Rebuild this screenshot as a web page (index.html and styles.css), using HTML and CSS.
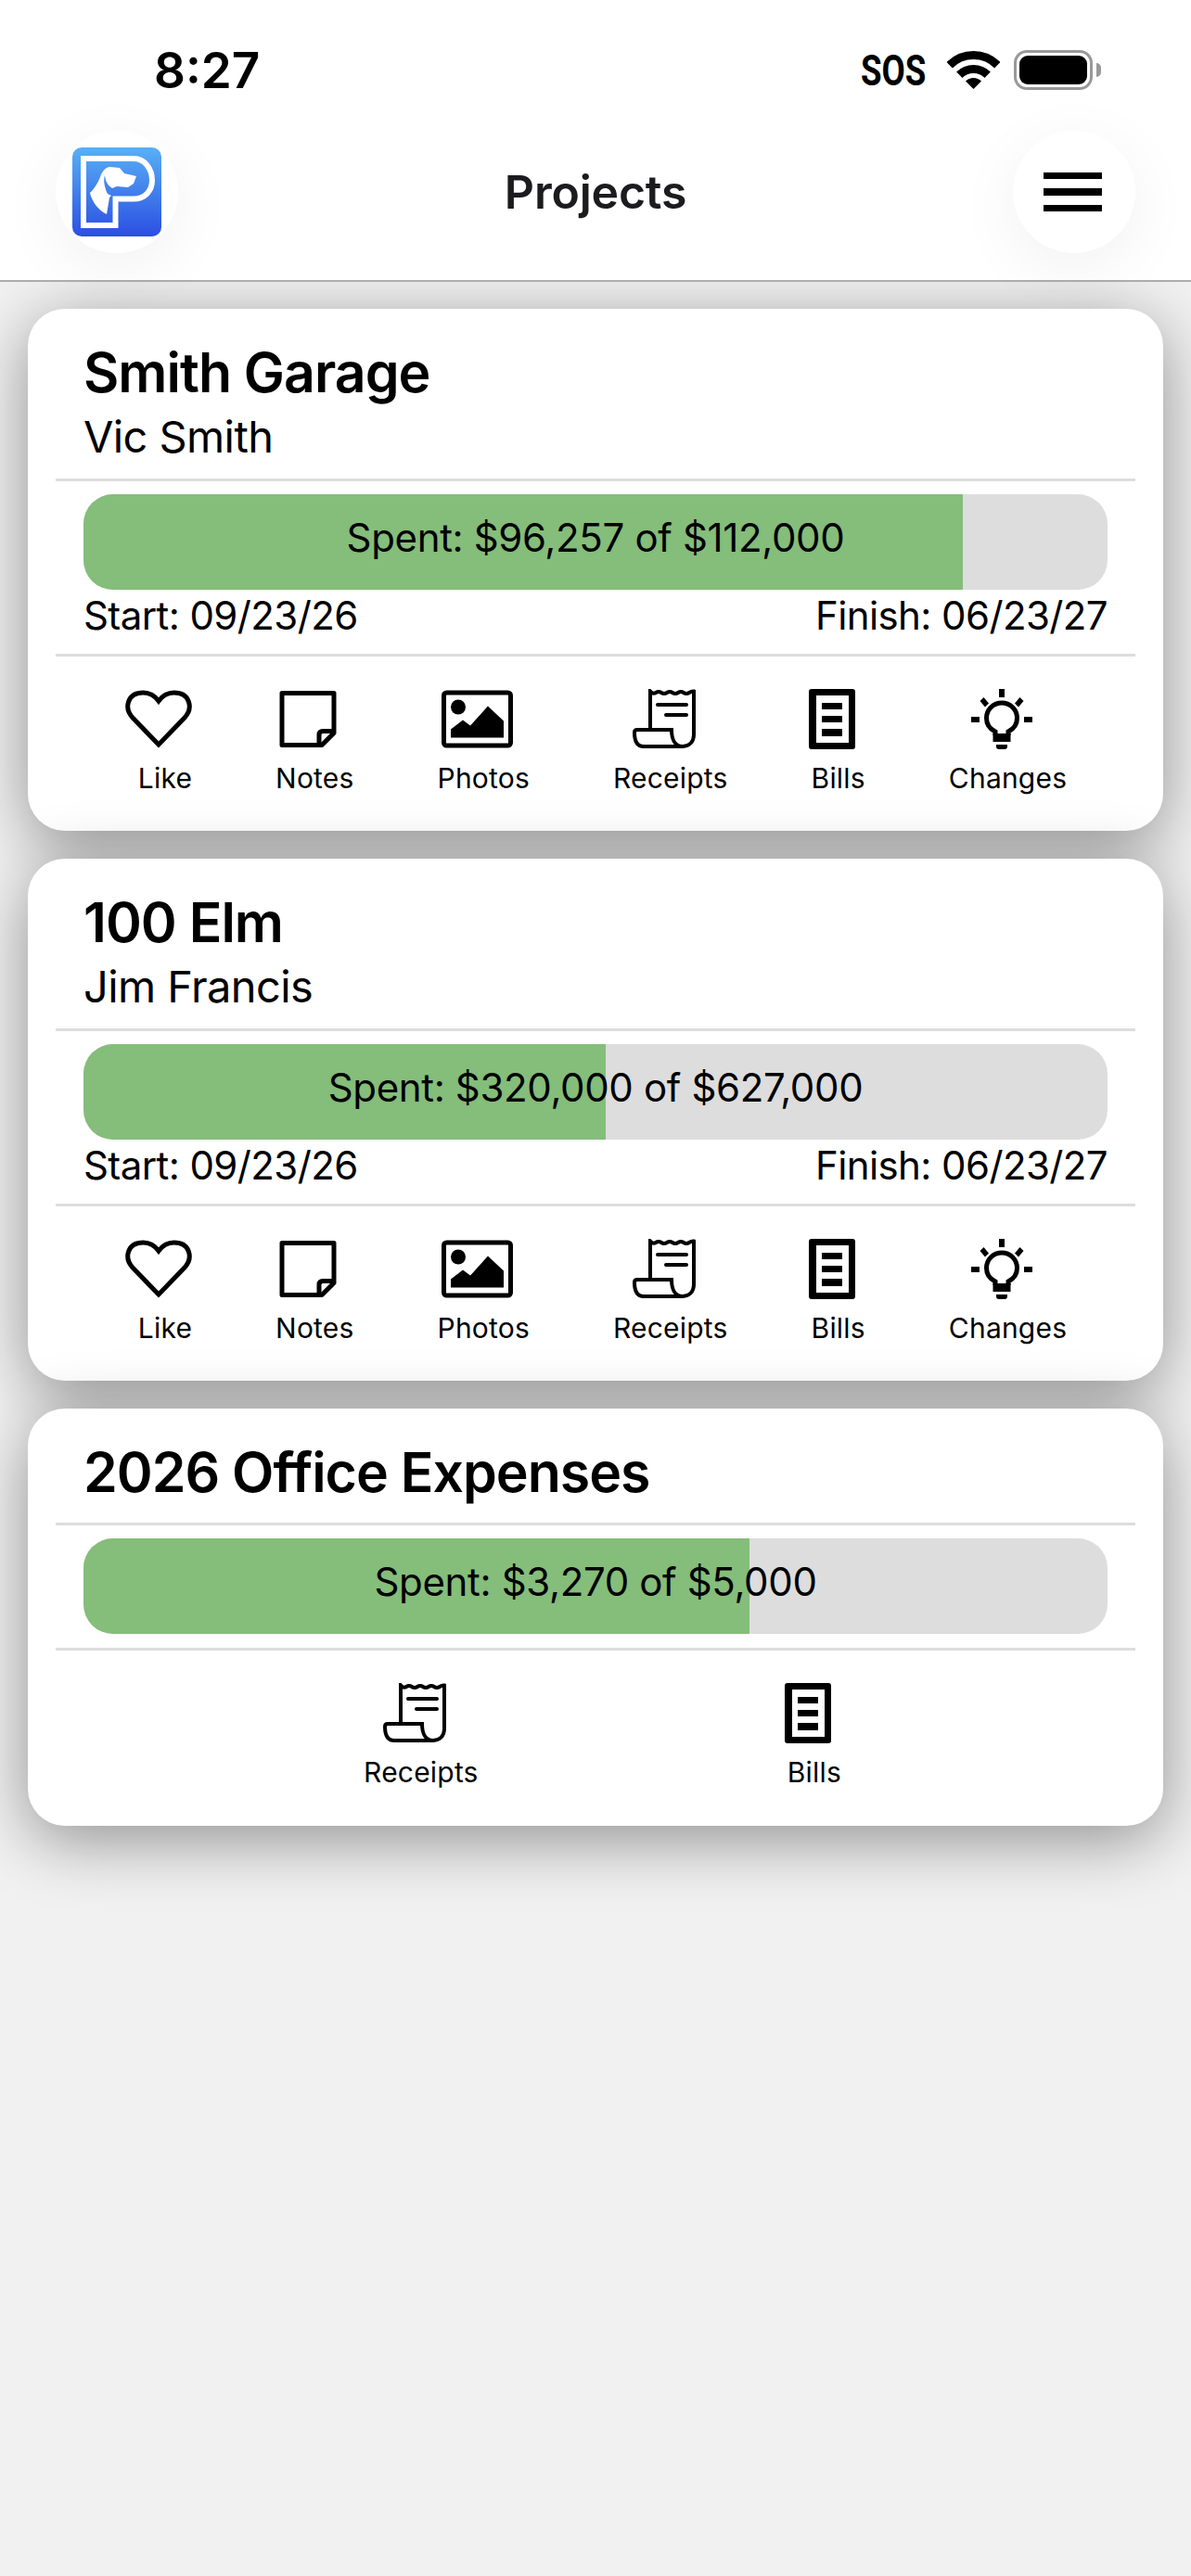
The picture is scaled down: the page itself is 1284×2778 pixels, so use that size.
FILE: index.html
```html
<!DOCTYPE html>
<html lang="en">
<head>
<meta charset="utf-8">
<title>Projects</title>
<link rel="stylesheet" href="styles.css">
</head>
<body>
<svg class="defs" width="0" height="0" aria-hidden="true">
  <defs>
    <linearGradient id="logoGrad" x1="0" y1="0" x2="0" y2="1">
      <stop offset="0" stop-color="#58b0f6"/>
      <stop offset="1" stop-color="#2b4fe2"/>
    </linearGradient>
    <symbol id="i-heart" viewBox="0 0 72 62">
      <path d="M36 58.5 L8 29.5 C-1.5 19 2 2.5 19.5 2.5 C26.5 2.5 32 6 36 11.5 C40 6 45.5 2.5 52.5 2.5 C70 2.5 73.5 19 64 29.5 Z" fill="none" stroke="#000" stroke-width="5"/>
    </symbol>
    <symbol id="i-notes" viewBox="0 0 62 62">
      <path d="M3 3 H59 V46 L46 59 H3 Z" fill="none" stroke="#000" stroke-width="5" stroke-linejoin="round"/>
      <path d="M59 44 H47 Q43 44 43 48 V59" fill="none" stroke="#000" stroke-width="5"/>
    </symbol>
    <symbol id="i-photos" viewBox="0 0 77 62">
      <rect x="2.5" y="2.5" width="72" height="57" rx="3" fill="none" stroke="#000" stroke-width="5"/>
      <ellipse cx="18" cy="18" rx="8" ry="8"/>
      <path d="M10 51 V42 L23 32 L31 38 L50 17 L67 33 V51 Z"/>
    </symbol>
    <symbol id="i-receipts" viewBox="0 0 68 63">
      <path d="M19 42 V1.5 Q22 5 25 3 T31 3 T37 3 T43 3 T49 3 T55 3 T61 3 T66 1.5 V48 C66 56 61 61 54 61 C47 61 42 55 42 43 H5 Q2 43 2 46 C2 55 5 61 12 61 H54" fill="none" stroke="#000" stroke-width="4"/>
      <path d="M27 16 H58 M36 27 H58" fill="none" stroke="#000" stroke-width="4" stroke-linecap="round"/>
    </symbol>
    <symbol id="i-bills" viewBox="0 0 50 65">
      <path fill-rule="evenodd" d="M3 0 H47 Q50 0 50 3 V62 Q50 65 47 65 H3 Q0 65 0 62 V3 Q0 0 3 0 Z M8 7 V58 H43 V7 Z"/>
      <rect x="14" y="15" width="22" height="7"/>
      <rect x="14" y="29" width="22" height="7"/>
      <rect x="14" y="43" width="22" height="8"/>
    </symbol>
    <symbol id="i-changes" viewBox="0 0 66 65">
      <path d="M30 0 H36 V9 H30 Z M0 30 H9 V36 H0 Z M57 30 H66 V36 H57 Z M9.5 13 L13.5 9 L19 15.5 L15 19.5 Z M56.5 13 L52.5 9 L47 15.5 L51 19.5 Z M27 60 H39 V62 Q39 65 36 65 H30 Q27 65 27 62 Z"/>
      <path d="M26 50 V46 C20 43 16.5 38 16.5 31.5 C16.5 22 24 15 33 15 C42 15 49.5 22 49.5 31.5 C49.5 38 46 43 40 46 V50" fill="none" stroke="#000" stroke-width="5"/>
      <path d="M23.5 48 H42.5 V57 H23.5 Z"/>
    </symbol>
  </defs>
</svg>

<header class="top">
  <div class="status">
    <span class="time">8:27</span>
    <div class="status-right">
      <span class="sos">SOS</span>
      <svg class="wifi" viewBox="0 0 57 41" width="57" height="41" aria-hidden="true">
        <path d="M2.7 15.2 A36.5 36.5 0 0 1 54.3 15.2" fill="none" stroke="#000" stroke-width="9"/>
        <path d="M13.3 25.8 A21.5 21.5 0 0 1 43.7 25.8" fill="none" stroke="#000" stroke-width="9"/>
        <path d="M28.5 41 L20 32.5 A12 12 0 0 1 37 32.5 Z"/>
      </svg>
      <div class="battery">
        <div class="battery-body"><div class="battery-fill"></div></div>
        <div class="battery-cap"></div>
      </div>
    </div>
  </div>
  <nav class="nav">
    <div class="round">
      <svg class="logo" viewBox="0 0 96 96" width="96" height="96" aria-label="Logo">
        <rect width="96" height="96" rx="10" fill="url(#logoGrad)"/>
        <path d="M12 12 H66 C78 12 86 23 86 35.5 C86 47 78 55.5 66 55.5 H46.5 V84 H12 Z" fill="none" stroke="#fff" stroke-width="6"/>
        <path d="M69 31 L56 28 L51 22 L40 21 C35 22 32 26 30 32 C27 39 24 44 19 49 C21 58 28 68 37 72 L40 54 L42 52 L38 50 C35 44 33 36 35 30 C36 36 37 40 43 44 L48 42 L60 43 L66 39 Z" fill="#fff"/>
      </svg>
    </div>
    <h1 class="page-title">Projects</h1>
    <button class="round menu" type="button" aria-label="Menu">
      <span class="bar-line"></span><span class="bar-line"></span><span class="bar-line"></span>
    </button>
  </nav>
</header>

<main class="list">
  <article class="card">
    <div class="head">
      <h2 class="name">Smith Garage</h2>
      <p class="client">Vic Smith</p>
    </div>
    <div class="progress">
      <div class="fill" style="width:85.9%"></div>
      <span class="spent">Spent: $96,257 of $112,000</span>
    </div>
    <div class="dates"><span>Start: 09/23/26</span><span>Finish: 06/23/27</span></div>
    <div class="actions">
      <a class="act"><svg class="ic w72"><use href="#i-heart"/></svg><span>Like</span></a>
      <a class="act"><svg class="ic w62"><use href="#i-notes"/></svg><span>Notes</span></a>
      <a class="act"><svg class="ic w77"><use href="#i-photos"/></svg><span>Photos</span></a>
      <a class="act"><svg class="ic w68"><use href="#i-receipts"/></svg><span>Receipts</span></a>
      <a class="act"><svg class="ic w50"><use href="#i-bills"/></svg><span>Bills</span></a>
      <a class="act"><svg class="ic w66"><use href="#i-changes"/></svg><span>Changes</span></a>
    </div>
  </article>

  <article class="card">
    <div class="head">
      <h2 class="name">100 Elm</h2>
      <p class="client">Jim Francis</p>
    </div>
    <div class="progress">
      <div class="fill" style="width:51%"></div>
      <span class="spent">Spent: $320,000 of $627,000</span>
    </div>
    <div class="dates"><span>Start: 09/23/26</span><span>Finish: 06/23/27</span></div>
    <div class="actions">
      <a class="act"><svg class="ic w72"><use href="#i-heart"/></svg><span>Like</span></a>
      <a class="act"><svg class="ic w62"><use href="#i-notes"/></svg><span>Notes</span></a>
      <a class="act"><svg class="ic w77"><use href="#i-photos"/></svg><span>Photos</span></a>
      <a class="act"><svg class="ic w68"><use href="#i-receipts"/></svg><span>Receipts</span></a>
      <a class="act"><svg class="ic w50"><use href="#i-bills"/></svg><span>Bills</span></a>
      <a class="act"><svg class="ic w66"><use href="#i-changes"/></svg><span>Changes</span></a>
    </div>
  </article>

  <article class="card compact">
    <div class="head">
      <h2 class="name">2026 Office Expenses</h2>
    </div>
    <div class="progress">
      <div class="fill" style="width:65%"></div>
      <span class="spent">Spent: $3,270 of $5,000</span>
    </div>
    <div class="actions">
      <a class="act"><svg class="ic w68"><use href="#i-receipts"/></svg><span>Receipts</span></a>
      <a class="act"><svg class="ic w50"><use href="#i-bills"/></svg><span>Bills</span></a>
    </div>
  </article>
</main>
</body>
</html>
```

FILE: styles.css
```css
* { box-sizing: border-box; }

html, body {
  margin: 0;
  height: 2778px;
  background: #f1f1f1;
  overflow: hidden;
  color: #000;
  font-family: Inter, "Liberation Sans", sans-serif;
}

.defs { display: block; height: 0; }

.top {
  position: relative;
  z-index: 2;
  height: 304px;
  background: #fff;
  border-bottom: 2px solid #adadad;
}

.status {
  height: 141px;
  padding: 49px 97px 0 166px;
  display: flex;
  justify-content: space-between;
  align-items: flex-start;
}

.time {
  font-size: 53px;
  line-height: 54px;
  font-weight: 600;
}

.status-right {
  display: flex;
  align-items: center;
  margin-top: 5px;
}

.sos {
  width: 70px;
  font-family: Roboto, sans-serif;
  font-weight: 700;
  font-size: 47px;
  line-height: 43px;
  white-space: nowrap;
  transform: scaleX(.78);
  transform-origin: left center;
}

.wifi { margin-left: 23px; }

.battery {
  margin-left: 15px;
  display: flex;
  align-items: center;
}

.battery-body {
  width: 85px;
  height: 43px;
  padding: 3px;
  border: 3px solid #999;
  border-radius: 14px;
}

.battery-fill {
  height: 100%;
  background: #000;
  border-radius: 9px;
}

.battery-cap {
  width: 5px;
  height: 15px;
  margin-left: 4px;
  background: #999;
  border-radius: 0 5px 5px 0;
}

.nav {
  height: 132px;
  padding: 0 60px;
  display: flex;
  justify-content: space-between;
  align-items: center;
}

.round {
  width: 132px;
  height: 132px;
  border: 0;
  padding: 0;
  border-radius: 50%;
  background: #fff;
  box-shadow: 0 16px 70px rgba(0, 0, 0, .06);
  display: flex;
  flex-direction: column;
  align-items: center;
  justify-content: center;
}

.menu { gap: 10px; padding-right: 3px; }

.bar-line {
  display: block;
  width: 63px;
  height: 7.5px;
  background: #000;
}

.page-title {
  margin: 0;
  font-size: 50px;
  line-height: 60px;
  font-weight: 600;
  letter-spacing: -.2px;
  color: #1c1c1e;
}

.list {
  padding: 29px 30px 0;
  display: flex;
  flex-direction: column;
  gap: 30px;
}

.card {
  height: 563px;
  background: #fff;
  border-radius: 40px;
  padding: 0 30px;
  box-shadow: 0 15px 70px rgba(0, 0, 0, .4);
}

.card.compact { height: 450px; }

.head {
  height: 186px;
  padding: 34px 30px 0;
  border-bottom: 3px solid #ddd;
}

.compact .head { height: 126px; }

.name {
  margin: 0;
  font-size: 59px;
  line-height: 70px;
  font-weight: 600;
  letter-spacing: -1px;
}

.client {
  margin: 4px 0 0;
  font-size: 47px;
  line-height: 60px;
  letter-spacing: -.6px;
}

.progress {
  position: relative;
  height: 103px;
  margin: 14px 30px 0;
  padding-bottom: 9px;
  border-radius: 32px;
  background: #ddd;
  overflow: hidden;
  display: flex;
  align-items: center;
  justify-content: center;
}

.fill {
  position: absolute;
  left: 0;
  top: 0;
  bottom: 0;
  background: #85bd7a;
}

.spent {
  position: relative;
  font-size: 42px;
  line-height: 50px;
  letter-spacing: -.35px;
}

.dates {
  height: 69px;
  padding: 3px 30px 0;
  display: flex;
  justify-content: space-between;
  font-size: 42px;
  line-height: 50px;
  letter-spacing: -.6px;
}

.actions {
  padding: 35px 0 0 15px;
  border-top: 3px solid #ddd;
  display: flex;
  justify-content: center;
  gap: 90px;
}

.compact .actions {
  margin-top: 15px;
  gap: 333px;
}

.act {
  display: flex;
  flex-direction: column;
  align-items: center;
  font-size: 30px;
  line-height: 36px;
  letter-spacing: .2px;
}

.ic {
  display: block;
  height: 65px;
  margin: 0 -26px 13px -40px;
}

.w72 { width: 72px; }
.w62 { width: 62px; }
.w77 { width: 77px; }
.w68 { width: 68px; }
.w50 { width: 50px; }
.w66 { width: 66px; }
```
